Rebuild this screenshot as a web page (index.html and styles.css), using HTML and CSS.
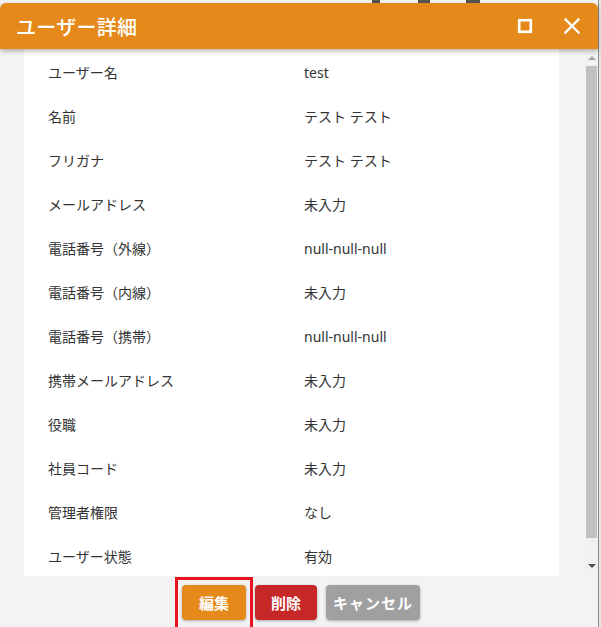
FILE: index.html
```html
<!DOCTYPE html>
<html lang="ja">
<head>
<meta charset="utf-8">
<link rel="stylesheet" href="styles.css">
</head>
<body>
<div class="backdrop">
  <span class="bg-bit b1"></span><span class="bg-bit b2"></span><span class="bg-bit b3"></span>
</div>
<div class="dialog">
  <div class="header">
    <div class="title">ユーザー詳細</div>
    <div class="tools">
      <svg class="icon" width="16" height="16" viewBox="0 0 16 16"><rect x="2.2" y="2.2" width="11.6" height="11.6" fill="none" stroke="#fff" stroke-width="2.6"/></svg>
      <svg class="icon" width="18" height="18" viewBox="0 0 18 18"><path d="M2.5 2.5 L15.5 15.5 M15.5 2.5 L2.5 15.5" stroke="#fff" stroke-width="2.4" stroke-linecap="square"/></svg>
    </div>
  </div>
  <div class="body">
    <div class="panel">
      <div class="row"><span class="label">ユーザー名</span><span class="value">test</span></div>
      <div class="row"><span class="label">名前</span><span class="value">テスト テスト</span></div>
      <div class="row"><span class="label">フリガナ</span><span class="value">テスト テスト</span></div>
      <div class="row"><span class="label">メールアドレス</span><span class="value">未入力</span></div>
      <div class="row"><span class="label">電話番号（外線）</span><span class="value">null-null-null</span></div>
      <div class="row"><span class="label">電話番号（内線）</span><span class="value">未入力</span></div>
      <div class="row"><span class="label">電話番号（携帯）</span><span class="value">null-null-null</span></div>
      <div class="row"><span class="label">携帯メールアドレス</span><span class="value">未入力</span></div>
      <div class="row"><span class="label">役職</span><span class="value">未入力</span></div>
      <div class="row"><span class="label">社員コード</span><span class="value">未入力</span></div>
      <div class="row"><span class="label">管理者権限</span><span class="value">なし</span></div>
      <div class="row"><span class="label">ユーザー状態</span><span class="value">有効</span></div>
    </div>
    <div class="scrollbar">
      <span class="arrow up"></span>
      <span class="thumb"></span>
      <span class="arrow down"></span>
    </div>
  </div>
  <div class="footer">
    <button class="btn btn-edit">編集<span class="highlight"></span></button>
    <button class="btn btn-delete">削除</button>
    <button class="btn btn-cancel">キャンセル</button>
  </div>
</div>
</body>
</html>
```
FILE: styles.css
```css
html, body {
  margin: 0;
  padding: 0;
}
body {
  width: 601px;
  height: 627px;
  background: #d9d9d9;
  overflow: hidden;
  position: relative;
  font-family: "Noto Sans", "Noto Sans CJK JP", sans-serif;
}
.backdrop {
  position: absolute;
  left: 0;
  top: 0;
  width: 601px;
  height: 627px;
  background: linear-gradient(to right, #f4f4f4 0, #f4f4f4 598px, #8a8a8a 598px, #8a8a8a 599px, #e6e6e6 599px);
}
.bg-bit {
  position: absolute;
  top: 0;
  height: 4px;
  background: #555;
}
.b1 { left: 372px; width: 8px; }
.b2 { left: 418px; width: 12px; }
.b3 { left: 466px; width: 14px; }
.dialog {
  position: relative;
  margin-top: 3px;
  width: 598px;
  height: 624px;
  background: #f3f3f3;
  border-radius: 6px 6px 0 0;
  display: flex;
  flex-direction: column;
}
.header {
  height: 46px;
  background: #e58a1a;
  border-radius: 6px 6px 0 0;
  box-shadow: 0 2px 5px rgba(0, 0, 0, 0.3);
  display: flex;
  align-items: center;
  justify-content: space-between;
  padding: 0 17px 0 16px;
  position: relative;
  z-index: 2;
}
.title {
  color: #fff;
  font-size: 20px;
  font-weight: 500;
  letter-spacing: 0.3px;
}
.tools {
  display: flex;
  align-items: center;
  gap: 30px;
}
.icon { display: block; }
.body {
  display: flex;
  padding-left: 24px;
  height: 527px;
}
.panel {
  width: 535px;
  background: #fff;
  overflow: hidden;
  padding-top: 1px;
}
.row {
  height: 44px;
  display: flex;
  align-items: center;
  font-size: 14px;
  color: #333;
}
.label {
  width: 256px;
  padding-left: 24px;
}
.value {
  color: #333;
}
.scrollbar {
  margin-left: 26px;
  width: 13px;
  margin-top: 3px;
  height: 521px;
  background: #f1f1f1;
  display: flex;
  flex-direction: column;
  align-items: center;
}
.arrow {
  width: 0;
  height: 0;
  border-left: 4px solid transparent;
  border-right: 4px solid transparent;
}
.arrow.up {
  border-bottom: 4px solid #a3a3a3;
  margin-top: 4px;
}
.arrow.down {
  border-top: 4px solid #505050;
  margin-top: auto;
  margin-bottom: 5px;
}
.thumb {
  width: 11px;
  height: 472px;
  margin-top: 6px;
  background: #c1c1c1;
}
.footer {
  display: flex;
  justify-content: center;
  gap: 9px;
  padding-top: 9px;
  padding-left: 4px;
}
.btn {
  position: relative;
  height: 35px;
  border: none;
  border-radius: 4px;
  color: #fff;
  font-family: "Noto Sans CJK JP", sans-serif;
  font-size: 15px;
  font-weight: 700;
  padding: 0;
  box-shadow: 0 1px 3px rgba(0, 0, 0, 0.3);
}
.btn-edit {
  width: 64px;
  background: #e58a1a;
}
.btn-delete {
  width: 62px;
  background: #c62828;
}
.btn-cancel {
  width: 94px;
  background: #a0a0a0;
  letter-spacing: 1px;
}
.highlight {
  position: absolute;
  left: -7px;
  top: -8px;
  width: 72px;
  height: 51px;
  border: 3px solid #e8141e;
}
```
